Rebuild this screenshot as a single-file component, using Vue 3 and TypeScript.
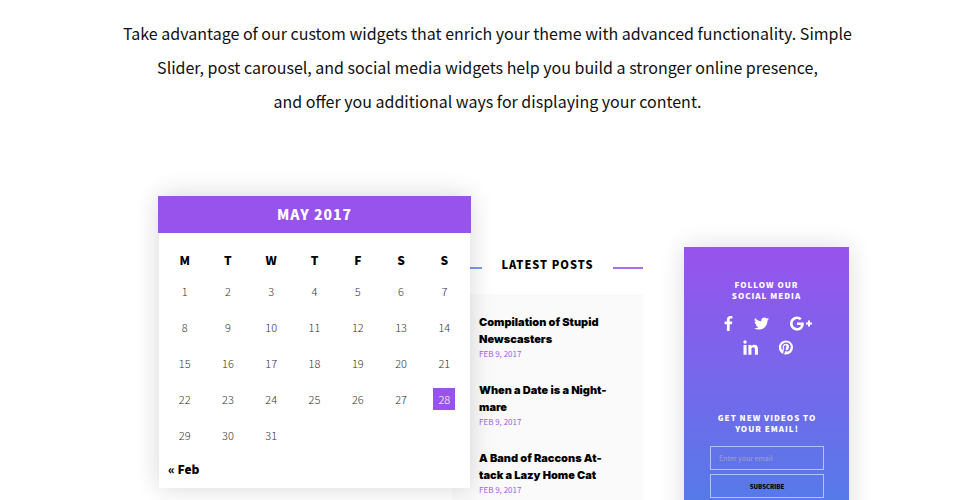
<script setup lang="ts">
import { ref } from 'vue'

interface Post {
  title: string[]
  date: string
}

interface SocialLink {
  name: string
  viewBox: string
  width: number
  path: string
}

const weekdays: string[] = ['M', 'T', 'W', 'T', 'F', 'S', 'S']
const today = 28
const daysInMonth = 31

const weeks: (number | null)[][] = Array.from({ length: 5 }, (_, week) =>
  Array.from({ length: 7 }, (_, day) => {
    const date = week * 7 + day + 1
    return date <= daysInMonth ? date : null
  }),
)

const posts: Post[] = [
  { title: ['Compilation of Stupid', 'Newscasters'], date: 'Feb 9, 2017' },
  { title: ['When a Date is a Night-', 'mare'], date: 'Feb 9, 2017' },
  { title: ['A Band of Raccons At-', 'tack a Lazy Home Cat'], date: 'Feb 9, 2017' },
]

const socialRows: SocialLink[][] = [
  [
    {
      name: 'Facebook',
      viewBox: '95 0 864 1664',
      width: 9,
      path: 'M959 12v264h-157q-86 0-116 36t-30 108v189h293l-39 296h-254v759h-306v-759h-255v-296h255v-218q0-186 104-288.500t277-102.500q147 0 228 12z',
    },
    {
      name: 'Twitter',
      viewBox: '44 256 1576 1280',
      width: 15,
      path: 'M1620 408q-67 98-162 167 1 14 1 42 0 130-38 259.500t-115.500 248.500-184.500 210.500-258 146-323 54.500q-271 0-496-145 35 4 78 4 225 0 401-138-105-2-188-64.500t-114-159.500q33 5 61 5 43 0 85-11-112-23-185.500-111.500t-73.500-205.500v-4q68 38 146 41-66-44-105-115t-39-154q0-88 44-163 121 149 294.500 238.500t371.500 99.500q-8-38-8-74 0-134 94.500-228.500t228.500-94.500q140 0 236 102 109-21 205-78-37 115-142 178 93-10 186-50z',
    },
    {
      name: 'Google Plus',
      viewBox: '0 150 2304 1490',
      width: 22,
      path: 'M1437 913q0 208-87 370.500t-248 254-369 91.500q-149 0-285-58t-234-156-156-234-58-285 58-285 156-234 234-156 285-58q286 0 491 192l-199 191q-117-113-292-113-123 0-227.500 62t-165.500 168.500-61 232.500 61 232.500 165.500 168.500 227.500 62q83 0 152.500-23t114.500-57.500 78.500-78.500 49-83 21.500-74h-416v-252h692q12 63 12 122zM2304 791v210h-209v209h-210v-209h-209v-210h209v-209h210v209h209z',
    },
  ],
  [
    {
      name: 'LinkedIn',
      viewBox: '0 0 24 23',
      width: 15,
      path: 'M.8 7.6h4.9V23H.8zM3.2 0a2.7 2.7 0 1 1 0 5.400a2.7 2.7 0 0 1 0-5.400zM8.600 7.600h4.900v2.200c.9-1.600 2.500-2.600 4.700-2.600 3.600 0 5.800 2.400 5.800 7V23h-5v-8.200c0-2.200-.8-3.600-2.600-3.600-1.900 0-2.900 1.400-2.900 3.600V23H8.600z',
    },
    {
      name: 'Pinterest',
      viewBox: '0 0 24 24',
      width: 14,
      path: 'M12 0a12 12 0 1 1 0 24c-1.200 0-2.300-.2-3.400-.5.500-.8 1-1.700 1.300-2.800l.8-3.200c.4.8 1.600 1.400 2.900 1.400 3.900 0 6.600-3.600 6.600-8.300 0-3.600-3.100-7-7.700-7-5.800 0-8.700 4.200-8.700 7.600 0 2.100.8 4 2.500 4.700.3.100.5 0 .6-.3l.3-1.100c.1-.3 0-.4-.2-.7-.5-.6-.8-1.300-.8-2.400 0-3 2.300-5.800 5.900-5.800 3.200 0 5 2 5 4.600 0 3.500-1.500 6.400-3.800 6.400-1.300 0-2.200-1-1.900-2.300.4-1.500 1.100-3.100 1.100-4.200 0-1-.5-1.800-1.600-1.800-1.300 0-2.300 1.300-2.300 3.100 0 1.100.4 1.900.4 1.900l-1.600 6.600c-.3 1.200-.2 2.600-.1 3.300A12 12 0 0 1 12 0z',
    },
  ],
]

const email = ref('')
</script>

<template>
  <main class="page">
    <p class="intro">
      Take advantage of our custom widgets that enrich your theme with advanced functionality. Simple<br />
      Slider, post carousel, and social media widgets help you build a stronger online presence,<br />
      and offer you additional ways for displaying your content.
    </p>

    <div class="widgets">
      <section class="calendar">
        <h2 class="calendar-title">May 2017</h2>
        <div class="calendar-body">
          <table class="days">
            <thead>
              <tr>
                <th v-for="(day, i) in weekdays" :key="i" scope="col">{{ day }}</th>
              </tr>
            </thead>
            <tbody>
              <tr v-for="(week, w) in weeks" :key="w">
                <td v-for="(date, d) in week" :key="d">
                  <span v-if="date" class="date" :class="{ today: date === today }">{{ date }}</span>
                </td>
              </tr>
            </tbody>
          </table>
          <a class="previous" href="#">« Feb</a>
        </div>
      </section>

      <section class="posts">
        <h2 class="posts-title">Latest Posts</h2>
        <ul class="post-list">
          <li v-for="post in posts" :key="post.title[0]" class="post">
            <a class="post-link" href="#">
              <span v-for="line in post.title" :key="line" class="post-line">{{ line }}</span>
            </a>
            <time class="post-date" datetime="2017-02-09">{{ post.date }}</time>
          </li>
        </ul>
      </section>

      <aside class="sidebar">
        <h3 class="sidebar-title">Follow our<br />social media</h3>
        <nav class="social">
          <div v-for="(row, r) in socialRows" :key="r" class="social-row">
            <a v-for="link in row" :key="link.name" href="#" :aria-label="link.name" class="social-link">
              <svg :viewBox="link.viewBox" :width="link.width" height="15" aria-hidden="true">
                <path :d="link.path" fill="currentColor" />
              </svg>
            </a>
          </div>
        </nav>
        <form class="subscribe" @submit.prevent>
          <label class="sidebar-title" for="email">Get new videos to<br />your email!</label>
          <input id="email" v-model="email" class="field" type="email" placeholder="Enter your email" />
          <button class="submit" type="submit">Subscribe</button>
        </form>
      </aside>
    </div>
  </main>
</template>

<style>
body {
  background: #fff;
}
</style>

<style scoped>
.page {
  box-sizing: border-box;
  height: 100vh;
  overflow: hidden;
  padding-top: 16px;
  color: #111;
  font-family: 'Noto Sans CJK SC', 'Noto Sans', sans-serif;
}

h2,
h3,
p,
ul {
  margin: 0;
  padding: 0;
}

a {
  color: inherit;
  text-decoration: none;
}

.intro {
  padding-left: 10px;
  font-size: 16px;
  line-height: 34px;
  text-align: center;
}

.widgets {
  display: grid;
  grid-template-columns: 313fr 172fr 206fr;
  align-items: start;
  padding: 78px 116px 0 158px;
}

.calendar {
  position: relative;
  z-index: 1;
}

.calendar-title {
  position: relative;
  z-index: 1;
  background: #9853ed;
  color: #fff;
  font-size: 14px;
  font-weight: 900;
  line-height: 37px;
  letter-spacing: 1px;
  text-align: center;
  text-transform: uppercase;
}

.calendar::before {
  content: '';
  position: absolute;
  inset: 0 1px;
  box-shadow: 0 0 24px rgba(0, 0, 0, 0.16);
}

.calendar-body {
  position: relative;
  margin: 0 1px;
  padding: 13px 4px 4px;
  background: #fff;
}

.days {
  width: 100%;
  table-layout: fixed;
  border-collapse: collapse;
}

.days th {
  height: 27px;
  padding: 0;
  color: #000;
  font-size: 12px;
  font-weight: 900;
  line-height: 18px;
}

.days td {
  height: 36px;
  padding: 0;
  color: #333;
  font-size: 11px;
  font-weight: 300;
  line-height: 22px;
  text-align: center;
}

.date {
  display: inline-block;
  width: 22px;
  height: 22px;
}

.days .today {
  background: #9853ed;
  color: #fff;
}

.previous {
  display: block;
  padding: 1px 0 0 5px;
  color: #000;
  font-size: 12px;
  font-weight: 900;
  line-height: 30px;
}

.posts {
  margin-left: -19px;
  padding-top: 55px;
}

.posts-title {
  display: flex;
  align-items: center;
  gap: 20px;
  color: #000;
  font-size: 11px;
  font-weight: 900;
  line-height: 26px;
  letter-spacing: 1px;
  text-transform: uppercase;
  white-space: nowrap;
}

.posts-title::before,
.posts-title::after {
  content: '';
  flex: 1;
  height: 2px;
  margin-top: 8px;
  background: #7a9bec;
}

.posts-title::after {
  background: #a86ff0;
}

.post-list {
  display: grid;
  gap: 23px;
  margin-top: 17px;
  padding: 20px 0 40px 27px;
  background: #fafafa;
  list-style: none;
}

.post-link {
  color: #000;
  font-family: Inter, 'Open Sans', sans-serif;
  font-size: 11px;
  font-weight: 900;
  line-height: 17px;
}

.post-line {
  display: block;
  white-space: nowrap;
}

.post-date {
  display: block;
  color: #a05cee;
  font-size: 8px;
  line-height: 11px;
  text-transform: uppercase;
}

.sidebar {
  min-height: 300px;
  margin: 51px 0 0 41px;
  padding-top: 32px;
  background: linear-gradient(#9853ed, #4f7ee8 280px);
  box-shadow: 0 0 24px rgba(0, 0, 0, 0.14);
  color: #fff;
  text-align: center;
}

.sidebar-title {
  display: block;
  font-size: 8px;
  font-weight: 900;
  line-height: 11px;
  letter-spacing: 1px;
  text-transform: uppercase;
  white-space: nowrap;
}

.social {
  display: grid;
  gap: 9px;
  padding: 15px 0 0 2px;
}

.social-row {
  display: flex;
  justify-content: center;
  gap: 21px;
}

.social-link {
  display: flex;
}

.subscribe {
  display: grid;
  gap: 4px;
  padding: 57px 25px 0 26px;
}

.subscribe .sidebar-title {
  justify-self: center;
  padding-bottom: 8px;
}

.field,
.submit {
  box-sizing: border-box;
  width: 100%;
  height: 24px;
  margin: 0;
  border: 1px solid rgba(255, 255, 255, 0.55);
  border-radius: 0;
  background: transparent;
  font-family: inherit;
}

.field {
  padding: 0 8px;
  color: #fff;
  font-size: 7px;
}

.field::placeholder {
  color: #a5a0c4;
  opacity: 1;
}

.submit {
  padding: 0;
  color: #000;
  font-size: 6px;
  font-weight: 900;
  text-transform: uppercase;
}
</style>
